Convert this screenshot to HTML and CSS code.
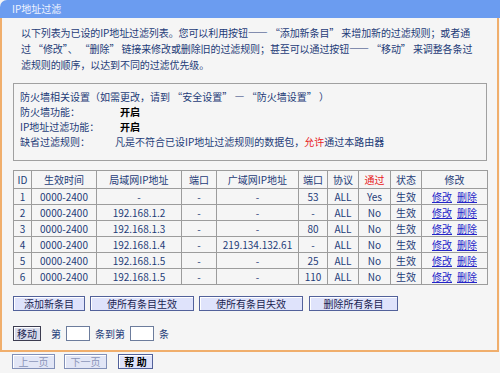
FILE: index.html
```html
<!DOCTYPE html>
<html lang="zh-CN">
<head>
<meta charset="utf-8">
<title>IP地址过滤</title>
<link rel="stylesheet" href="styles.css">
</head>
<body>
<div class="page">
  <div class="title">IP地址过滤</div>
  <div class="main">
    <p class="intro">以下列表为已设的IP地址过滤列表。您可以利用按钮—— “添加新条目” 来增加新的过滤规则；或者通<br>过 “修改”、 “删除” 链接来修改或删除旧的过滤规则；甚至可以通过按钮—— “移动” 来调整各条过<br>滤规则的顺序，以达到不同的过滤优先级。</p>
    <div class="fw">
      <div class="fw-row">防火墙相关设置（如需更改，请到 “安全设置” — “防火墙设置” ）</div>
      <div class="fw-row"><span class="lbl">防火墙功能：</span><b class="on">开启</b></div>
      <div class="fw-row"><span class="lbl">IP地址过滤功能：</span><b class="on">开启</b></div>
      <div class="fw-row"><span class="lbl lbl-s">缺省过滤规则：</span><span>凡是不符合已设IP地址过滤规则的数据包，<span class="red">允许</span>通过本路由器</span></div>
    </div>
    <table class="rules">
      <colgroup>
        <col class="c-id"><col class="c-time"><col class="c-ip"><col class="c-port"><col class="c-wan"><col class="c-port2"><col class="c-proto"><col class="c-pass"><col class="c-state"><col class="c-edit">
      </colgroup>
      <tr class="head"><td>ID</td><td>生效时间</td><td>局域网IP地址</td><td>端口</td><td>广域网IP地址</td><td>端口</td><td>协议</td><td class="red">通过</td><td>状态</td><td>修改</td></tr>
      <tr><td>1</td><td>0000-2400</td><td>-</td><td>-</td><td>-</td><td>53</td><td>ALL</td><td>Yes</td><td>生效</td><td><a href="#">修改</a><a href="#">删除</a></td></tr>
      <tr><td>2</td><td>0000-2400</td><td>192.168.1.2</td><td>-</td><td>-</td><td>-</td><td>ALL</td><td>No</td><td>生效</td><td><a href="#">修改</a><a href="#">删除</a></td></tr>
      <tr><td>3</td><td>0000-2400</td><td>192.168.1.3</td><td>-</td><td>-</td><td>80</td><td>ALL</td><td>No</td><td>生效</td><td><a href="#">修改</a><a href="#">删除</a></td></tr>
      <tr><td>4</td><td>0000-2400</td><td>192.168.1.4</td><td>-</td><td>219.134.132.61</td><td>-</td><td>ALL</td><td>No</td><td>生效</td><td><a href="#">修改</a><a href="#">删除</a></td></tr>
      <tr><td>5</td><td>0000-2400</td><td>192.168.1.5</td><td>-</td><td>-</td><td>25</td><td>ALL</td><td>No</td><td>生效</td><td><a href="#">修改</a><a href="#">删除</a></td></tr>
      <tr><td>6</td><td>0000-2400</td><td>192.168.1.5</td><td>-</td><td>-</td><td>110</td><td>ALL</td><td>No</td><td>生效</td><td><a href="#">修改</a><a href="#">删除</a></td></tr>
    </table>
    <div class="actions">
      <button class="btn w-add">添加新条目</button>
      <button class="btn w-all">使所有条目生效</button>
      <button class="btn w-all">使所有条目失效</button>
      <button class="btn w-del">删除所有条目</button>
    </div>
    <div class="move">
      <button class="btn btn-move">移动</button>
      <span class="mv-t1">第</span>
      <input class="num" type="text">
      <span class="mv-t2">条到第</span>
      <input class="num" type="text">
      <span class="mv-t2">条</span>
    </div>
  </div>
  <div class="footer">
    <button class="btn fbtn dis">上一页</button>
    <button class="btn fbtn dis">下一页</button>
    <button class="btn fbtn help">帮 助</button>
  </div>
</div>
</body>
</html>
```
FILE: styles.css
```css
html, body {
  margin: 0;
  padding: 0;
  background: #f5f5f5;
}
body {
  font-family: "Noto Sans CJK SC", "Liberation Sans", sans-serif;
  font-size: 10px;
  color: #1e3c78;
}
.page {
  width: 500px;
  height: 373px;
  overflow: hidden;
}
.title {
  height: 18px;
  line-height: 18px;
  background: #6b9cf0;
  color: #eef3ff;
  font-size: 10px;
  padding-left: 12px;
  border-top-left-radius: 7px;
}
.main {
  border-left: 2px solid #f0ae6c;
  border-right: 2px solid #f0ae6c;
  border-bottom: 2px solid #f0ae6c;
  margin-right: 1px;
  padding: 7px 10px 8px 11px;
  height: 317px;
}
.intro {
  margin: 0 0 0 8px;
  line-height: 16px;
  white-space: nowrap;
  letter-spacing: -0.1px;
}
.fw {
  margin-top: 10px;
  border: 1px solid #a0a0a0;
  padding: 5px 6px 11px;
  height: 60px;
}
.fw-row {
  line-height: 15px;
  white-space: nowrap;
}
.lbl {
  display: inline-block;
  width: 100px;
}
.lbl-s {
  width: 95px;
}
.on {
  color: #000;
  font-weight: bold;
}
.red {
  color: #e8201c;
}
.rules {
  margin-top: 9px;
  width: 474px;
  border-collapse: collapse;
  table-layout: fixed;
}
.rules td {
  border: 1px solid #9c9c9c;
  height: 15px;
  padding: 0;
  text-align: center;
  line-height: 14px;
  white-space: nowrap;
  overflow: hidden;
}
.rules .head td {
  height: 17px;
}
.rules a {
  color: #2424c8;
  text-decoration: underline;
}
.rules a + a {
  margin-left: 5px;
}
.c-id { width: 18px; }
.c-time { width: 65px; }
.c-ip { width: 85px; }
.c-port { width: 35px; }
.c-wan { width: 82px; }
.c-port2 { width: 29px; }
.c-proto { width: 31px; }
.c-pass { width: 32px; }
.c-state { width: 31px; }
.c-edit { width: 66px; }
.actions {
  margin-top: 11px;
  display: flex;
  gap: 5px;
}
.btn {
  height: 15px;
  padding: 0;
  margin: 0;
  border: 1px solid #52619a;
  background: #dfe3fb;
  color: #1a2450;
  font-family: "Noto Sans CJK SC", "Liberation Sans", sans-serif;
  font-size: 10px;
  line-height: 13px;
  box-shadow: inset 1px 1px 0 #ffffff;
}
.w-add { width: 72px; }
.w-all { width: 104px; }
.w-del { width: 89px; margin-left: 1px; }
.move {
  margin-top: 15px;
  display: flex;
  align-items: center;
  height: 15px;
}
.btn-move {
  width: 28px;
  background: #d9dcec;
  border-color: #3c3c50;
}
.mv-t1 {
  margin-left: 10px;
}
.mv-t2 {
  margin-left: 5px;
}
.num {
  margin-left: 5px;
  width: 22px;
  height: 13px;
  padding: 0;
  border: 1px solid #6c7c9c;
  background: #ffffff;
}
.footer {
  display: flex;
  gap: 9px;
  padding: 2px 0 0 12px;
}
.fbtn {
  width: 43px;
  height: 15px;
}
.dis {
  color: #8a94b8;
  background: #e2e6f6;
  border-color: #8290b8;
}
.help {
  width: 35px;
  margin-left: 2px;
  color: #000;
  font-weight: bold;
}
```
